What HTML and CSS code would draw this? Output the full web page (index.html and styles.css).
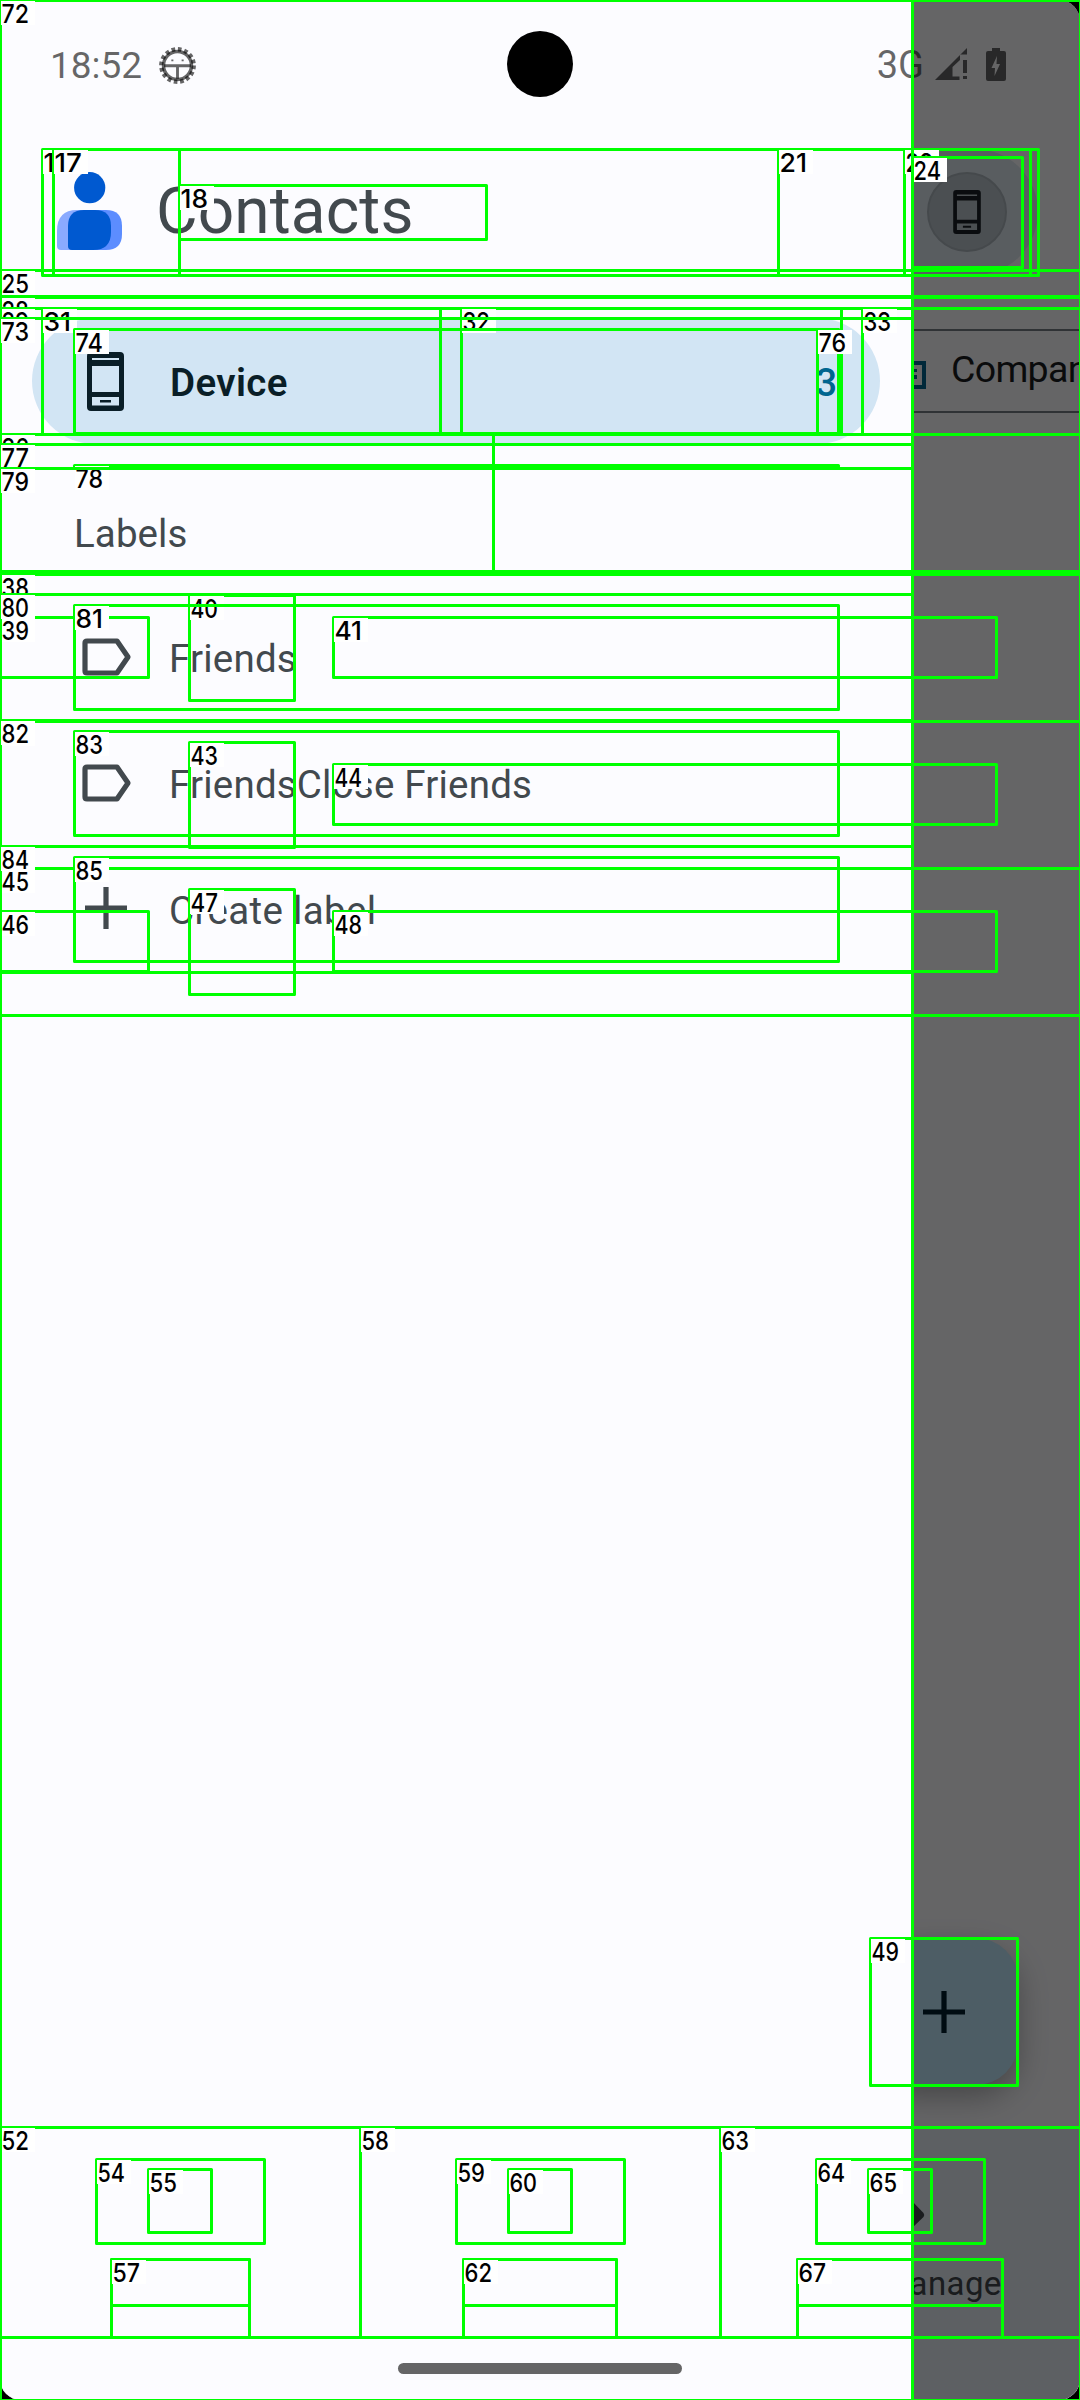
FILE: index.html
```html
<!DOCTYPE html>
<html lang="en">
<head>
<meta charset="utf-8">
<title>Contacts</title>
<link rel="stylesheet" href="styles.css">
</head>
<body>
<svg class="defs" width="0" height="0">
  <symbol id="phone" viewBox="0 0 37 59">
    <path fill="currentColor" fill-rule="evenodd" d="M4 0H33A4 4 0 0 1 37 4V55A4 4 0 0 1 33 59H4A4 4 0 0 1 0 55V4A4 4 0 0 1 4 0ZM5 6V8H32V6ZM5 14V40H32V14ZM5 45V53.5H32V45ZM13 48H24V50.5H13Z"/>
  </symbol>
  <symbol id="label" viewBox="0 0 50 38">
    <path fill="none" stroke="currentColor" stroke-width="5.2" stroke-linejoin="round" d="M5 3H35L46 19L35 35H5Q3 35 3 33V5Q3 3 5 3Z"/>
  </symbol>
  <symbol id="plus" viewBox="0 0 42 42">
    <path fill="currentColor" d="M18.4 0H23.6V18.4H42V23.6H23.6V42H18.4V23.6H0V18.4H18.4Z"/>
  </symbol>
</svg>
<div class="device">
  <div class="app">
    <div class="search-bar"><div class="avatar"><svg class="avatar-icon"><use href="#phone"/></svg></div></div>
    <div class="chip">
      <svg class="company-icon" viewBox="0 0 42 36"><path fill="currentColor" fill-rule="evenodd" d="M0 0H21V4H42V32H0ZM21 8V12H25V15H21V18H25V21H21V24H25V28H38V8ZM29 12H33V15H29ZM29 18H33V22H29Z"/></svg>
      <span>Company</span>
    </div>
    <div class="list"></div>
    <div class="fab"><svg class="fab-icon"><use href="#plus"/></svg></div>
    <div class="bottom-nav">
      <div class="nav-item">
        <svg class="manage-icon" viewBox="0 0 63 63"><path fill="currentColor" d="M42 31L54.5 44Q56 46 54.5 48L42 60L28 46Z"/></svg>
        <span>Fix &amp; manage</span>
      </div>
    </div>
  </div>
  <div class="scrim"></div>
  <nav class="drawer">
    <header class="brand">
      <svg class="logo" viewBox="0 0 66 80">
        <circle cx="32.7" cy="15.7" r="15.6" fill="#0059d0"/>
        <path fill="#8aaaff" d="M20 38H46V78H4Q0 78 0 74V59Q0 38 20 38Z"/>
        <path fill="#5c8dff" d="M34 38H49Q65 38 65 54V62Q65 78 49 78H34Z"/>
        <path fill="#0059d0" d="M27 38H38Q54 38 54 54V60Q54 78 36 78H15Q11 78 11 74V54Q11 38 27 38Z"/>
      </svg>
      <h1 class="title">Contacts</h1>
    </header>
    <div class="row selected"><svg class="icon-phone"><use href="#phone"/></svg><span class="row-text">Device</span><span class="count">3</span></div>
    <div class="section">Labels</div>
    <div class="row"><svg class="icon-label"><use href="#label"/></svg><span class="row-text">Friends</span></div>
    <div class="row"><svg class="icon-label"><use href="#label"/></svg><span class="row-text">FriendsClose Friends</span></div>
    <div class="row"><svg class="icon-plus"><use href="#plus"/></svg><span class="row-text create">Create label</span></div>
  </nav>
  <div class="status">
    <span class="clock">18:52</span>
    <svg class="bug" viewBox="-18 -18 36 36">
      <circle r="15.8" fill="none" stroke="currentColor" stroke-width="4.2" stroke-dasharray="3.5 2.7"/>
      <circle r="13.6" fill="none" stroke="currentColor" stroke-width="3.4"/>
      <path d="M-13 .3H13M0 .3V13" stroke="currentColor" stroke-width="2.8"/>
      <path d="M-6-5h2M4-5h2" stroke="currentColor" stroke-width="1.8"/>
    </svg>
    <span class="network">3G</span>
    <svg class="signal" viewBox="0 0 32 32"><path fill="currentColor" d="M0 32L32 0V6.5H25V12L17.5 19V28.5H24.5V32ZM28 12H32V25H28ZM28 28H32V31H28Z"/></svg>
    <svg class="battery" viewBox="0 0 20 33"><path fill="currentColor" fill-rule="evenodd" d="M6 0H14V3H18Q20 3 20 5V31Q20 33 18 33H2Q0 33 0 31V5Q0 3 2 3H6ZM11 8L5.5 20H9L8.5 28L14 16H10.5Z"/></svg>
  </div>
  <div class="camera"></div>
  <div class="home-pill"></div>
</div>
<svg class="annotations" id="annotations" width="1080" height="2400" viewBox="0 0 1080 2400"></svg>
<script src="boxes.js"></script>
</body>
</html>
```
FILE: styles.css
```css
* { box-sizing: border-box; }
body { margin: 0; background: #000; font-family: Roboto, "Noto Sans", sans-serif; position: relative; width: 1080px; height: 2400px; overflow: hidden; }
.defs { position: absolute; }
.device { position: relative; width: 1080px; height: 2400px; border-radius: 21px; overflow: hidden; background: #fcfcff; }
.app { display: flex; flex-direction: column; height: 2400px; padding-top: 149px; }
.search-bar { height: 126px; margin: 0 42px; border-radius: 63px; background: #dee8f0; display: flex; align-items: center; justify-content: flex-end; padding-right: 31px; flex: none; }
.avatar { width: 80px; height: 80px; border-radius: 50%; background: #bcc6cd; border: 2px solid #adb6bd; display: flex; align-items: center; justify-content: center; }
.avatar-icon { width: 28px; height: 44px; color: #1a2026; }
.chip { margin: 54px 0 0 862px; width: 260px; height: 84px; border: 2.5px solid #757d84; border-radius: 21px; display: flex; align-items: center; padding-left: 20px; gap: 25px; flex: none; font-size: 37.5px; font-weight: 450; letter-spacing: -.7px; color: #1a1c1f; white-space: nowrap; }
.chip span { position: relative; top: -2px; }
.company-icon { width: 42px; height: 36px; color: #00658f; flex: none; margin-top: 7px; }
.list { flex: 1; }
.fab { width: 147px; height: 147px; margin: 0 62px 42px auto; padding-right: 2px; border-radius: 42px; background: #c0e8fc; box-shadow: 0 12px 30px rgba(0,0,0,.3); display: flex; align-items: center; justify-content: center; flex: none; }
.fab-icon { width: 42px; height: 42px; color: #001e2d; }
.bottom-nav { height: 273px; background: #e8f0f8; display: flex; justify-content: flex-end; flex: none; }
.nav-item { width: 360px; padding-top: 42px; display: flex; flex-direction: column; align-items: center; gap: 31px; color: #41474d; font-size: 33px; line-height: 38px; letter-spacing: .4px; font-weight: 450; }
.nav-item span { margin-top: 2px; }
.manage-icon { width: 63px; height: 63px; }
.scrim { position: absolute; inset: 0; background: rgba(0,0,0,.6); }
.drawer { position: absolute; left: 0; top: 0; width: 912px; height: 2400px; background: #fcfcff; color: #42494e; padding-top: 150px; }
.brand { height: 168px; padding-left: 57px; display: flex; align-items: flex-start; padding-top: 22px; }
.logo { width: 66px; height: 80px; }
.title { margin: 4px 0 0 33px; font-size: 64px; line-height: 72px; font-weight: 400; letter-spacing: .1px; }
.row { height: 126px; padding-left: 82px; display: flex; align-items: center; font-size: 38.5px; font-weight: 450; }
.row-text { width: 500px; margin-left: 37px; white-space: nowrap; padding-top: 3px; letter-spacing: .2px; }
.create { letter-spacing: .35px; }
.selected { margin: 0 32px; padding: 0 43px 0 55px; border-radius: 63px; background: #d2e5f4; color: #0a1e27; font-weight: 600; }
.selected .row-text { margin-left: 46px; letter-spacing: .35px; }
.count { margin-left: auto; color: #00658f; font-weight: 500; font-size: 38px; padding-top: 3px; }
.section { height: 150px; padding: 68px 0 0 74px; font-size: 38.5px; font-weight: 450; line-height: 44px; letter-spacing: .1px; }
.icon-phone { width: 37px; height: 59px; }
.icon-label { width: 50px; height: 38px; margin-top: -1px; }
.icon-plus { width: 42px; height: 42px; margin: -2px 5px 0 3px; }
.status { position: absolute; left: 0; top: 0; width: 1080px; height: 128px; display: flex; align-items: center; padding: 0 74px 0 50px; color: rgba(0,0,0,.6); }
.clock { font-size: 37px; padding-top: 3px; }
.bug { width: 37px; height: 37px; margin: 2px 0 0 17px; }
.network { margin: 1px 11px 0 auto; font-size: 38px; font-weight: 450; }
.signal { width: 32px; height: 32px; }
.battery { width: 20px; height: 33px; margin-left: 19px; }
.camera { position: absolute; left: 507px; top: 31px; width: 66px; height: 66px; border-radius: 50%; background: #000; }
.home-pill { position: absolute; left: 398px; top: 2363px; width: 284px; height: 11px; border-radius: 6px; background: #656566; }
.annotations { position: absolute; left: 0; top: 0; }
.box { fill: none; stroke: #0f0; stroke-width: 3; stroke-linejoin: round; }
.tag { fill: #fff; }
.tag-text { font: 500 25.5px Inter, sans-serif; fill: #000; }
```
FILE: boxes.js
```js
// number (0 = untagged), left, top, right, bottom
const boxes = [
  [16, 42, 149, 1038, 275], [17, 53, 149, 179, 275], [18, 179, 185, 486, 239],
  [21, 778, 149, 904, 275], [23, 904, 149, 1030, 275], [24, 912, 157, 1022, 267],
  [25, 0, 270, 1080, 296], [28, 0, 297, 1080, 434], [29, 0, 308, 1080, 434],
  [31, 42, 308, 440, 434], [32, 461, 308, 841, 434], [33, 862, 308, 1090, 434],
  [36, 0, 434, 493, 571], [37, 0, 571, 1080, 574], [38, 0, 574, 1080, 721],
  [39, 0, 617, 148, 677], [40, 189, 595, 294, 700], [41, 333, 617, 996, 677],
  [42, 0, 721, 1080, 868], [43, 189, 742, 294, 847], [44, 333, 764, 996, 824],
  [45, 0, 868, 1080, 1015], [46, 0, 911, 148, 971], [47, 189, 889, 294, 994], [48, 333, 911, 996, 971],
  [49, 870, 1938, 1017, 2085],
  [52, 0, 2127, 360, 2337], [54, 96, 2159, 264, 2243], [55, 148, 2169, 211, 2232],
  [0, 111, 2259, 249, 2337], [57, 111, 2259, 249, 2305],
  [58, 360, 2127, 720, 2337], [59, 456, 2159, 624, 2243], [60, 508, 2169, 571, 2232],
  [0, 463, 2259, 616, 2337], [62, 463, 2259, 616, 2305],
  [63, 720, 2127, 1080, 2337], [64, 816, 2159, 984, 2243], [65, 868, 2169, 931, 2232],
  [0, 797, 2259, 1002, 2337], [67, 797, 2259, 1002, 2305],
  [0, 0, 0, 1080, 2400], [72, 0, 0, 912, 2400],
  [73, 0, 318, 912, 444], [74, 74, 329, 838, 433], [76, 817, 329, 838, 433],
  [77, 0, 444, 912, 468], [78, 74, 465, 838, 466], [79, 0, 468, 912, 573],
  [80, 0, 594, 912, 720], [81, 74, 605, 838, 709],
  [82, 0, 720, 912, 846], [83, 74, 731, 838, 835],
  [84, 0, 846, 912, 972], [85, 74, 857, 838, 961]
];
document.getElementById('annotations').innerHTML = boxes.map(([n, x, y, r, b]) =>
  `<rect class="box" x="${x + .5}" y="${y + .5}" width="${r - x}" height="${b - y}"/>` +
  (n ? `<rect class="tag" x="${x + 1}" y="${y + 1}" width="34" height="24"/>` +
       `<text class="tag-text" x="${x + 1.5}" y="${y + 22.7}" textLength="27.5" lengthAdjust="spacingAndGlyphs">${n}</text>` : '')
).join('');
```
